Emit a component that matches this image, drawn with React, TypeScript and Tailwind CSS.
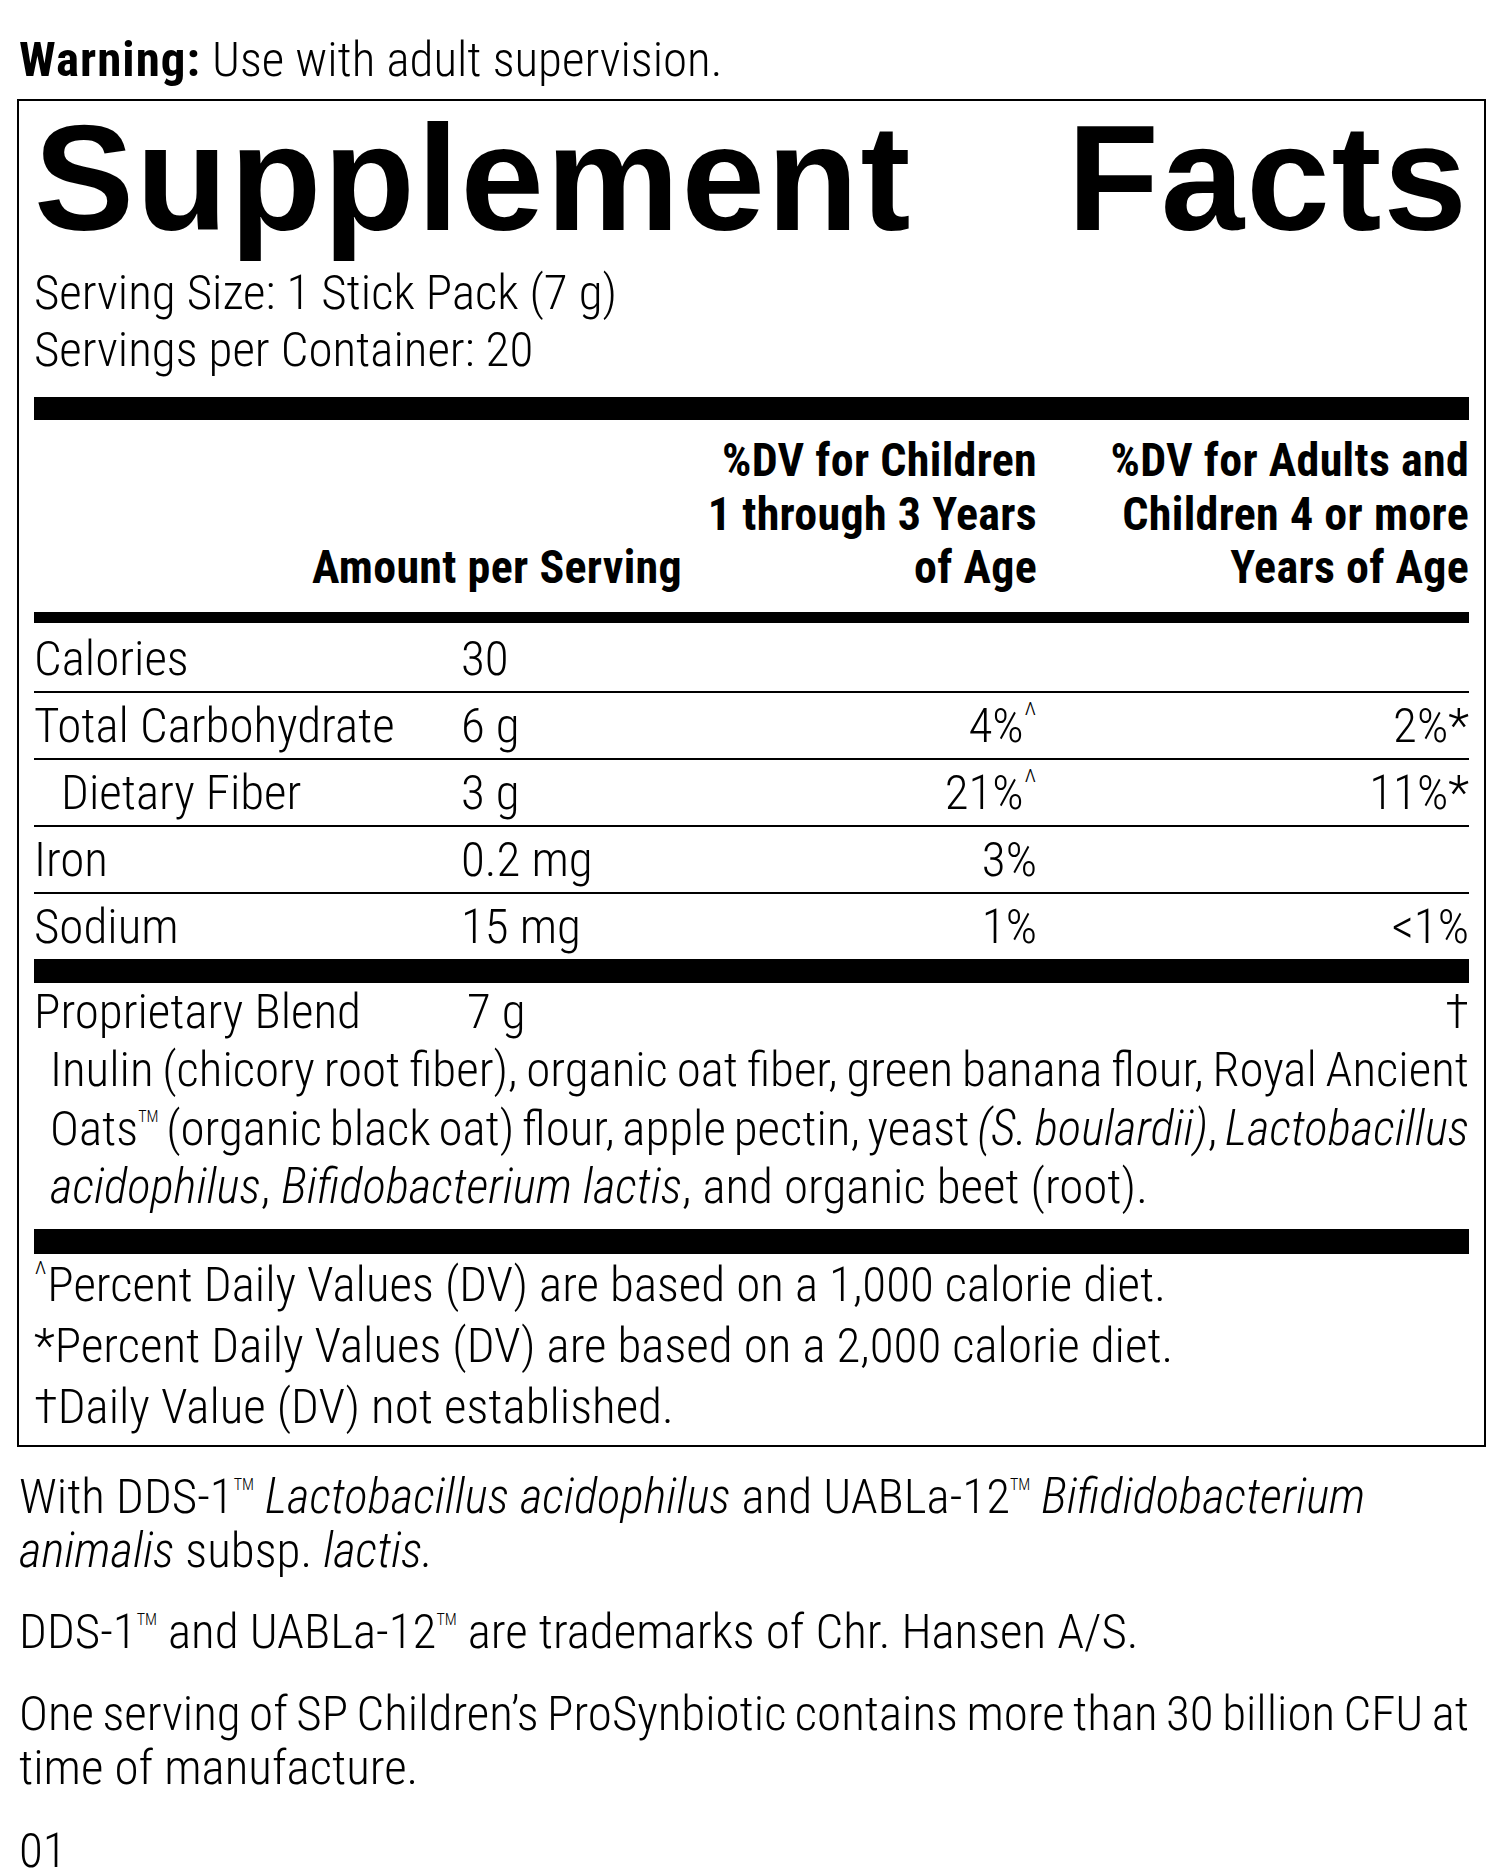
import type { ReactNode } from 'react';

const cond = "font-['Roboto_Condensed','Liberation_Sans',sans-serif]";

function Tm() {
  return <span className="relative -top-[23px] text-[16px] leading-none">TM</span>;
}

function Caret() {
  return <span className="relative -top-[14px] text-[36px] font-extralight leading-none">^</span>;
}

type Row = {
  label: string;
  amount: string;
  child?: ReactNode;
  adult?: ReactNode;
  indent?: boolean;
};

const rows: Row[] = [
  { label: 'Calories', amount: '30' },
  { label: 'Total Carbohydrate', amount: '6 g', child: <>4%<Caret /></>, adult: '2%*' },
  { label: 'Dietary Fiber', amount: '3 g', child: <>21%<Caret /></>, adult: '11%*', indent: true },
  { label: 'Iron', amount: '0.2 mg', child: '3%' },
  { label: 'Sodium', amount: '15 mg', child: '1%', adult: '<1%' },
];

export default function App() {
  return (
    <div className={`h-[1875px] w-[1500px] overflow-hidden bg-white text-black ${cond} text-[49px] font-light`}>
      <p className="ml-[19px] pt-[32px] leading-[56px]">
        <span className="font-bold tracking-[1px]">Warning:</span> Use with adult supervision.
      </p>

      <section className="ml-[17px] mt-[11px] w-[1469px] border-2 border-black px-[15px] pb-[8px]">
        <h1 className="mt-[2px] flex justify-between font-['Liberation_Sans',Arial,sans-serif] text-[150px] font-bold leading-[150px] tracking-[2px]">
          <span>Supplement</span>
          <span>Facts</span>
        </h1>

        <div className="mt-[11px] leading-[57px]">
          <p>Serving Size: 1 Stick Pack (7 g)</p>
          <p>Servings per Container: 20</p>
        </div>

        <div className="mt-[19px] h-[23px] bg-black" />

        {/* column heads */}
        <div className="mt-[14px] flex items-end text-[46px] font-bold leading-[53.5px] tracking-[0.3px]">
          <div className="w-[666px] pr-[18px] text-right">Amount per Serving</div>
          <div className="w-[337px] text-right">
            %DV for Children
            <br />1 through 3 Years
            <br />of Age
          </div>
          <div className="w-[432px] text-right">
            %DV for Adults and
            <br />Children 4 or more
            <br />Years of Age
          </div>
        </div>

        <div className="mt-[17px] h-[11px] bg-black" />

        <div className="pt-[3px]">
          {rows.map((r, i) => (
            <div
              key={r.label}
              className={
                i < rows.length - 1
                  ? 'flex h-[67px] border-b-2 border-black leading-[65px]'
                  : 'flex h-[65px] leading-[65px]'
              }
            >
              <div className={r.indent ? 'w-[427px] pl-[27px]' : 'w-[427px]'}>{r.label}</div>
              <div className="w-[239px]">{r.amount}</div>
              <div className="w-[337px] text-right">{r.child}</div>
              <div className="w-[432px] text-right">{r.adult}</div>
            </div>
          ))}
        </div>

        <div className="h-[24px] bg-black" />

        <div className="flex leading-[58.5px]">
          <div className="w-[427px]">Proprietary Blend</div>
          <div className="w-[239px] pl-[6px]">7 g</div>
          <div className="flex-1 text-right">†</div>
        </div>
        <div className="pl-[16px] leading-[58.5px]">
          <p className="whitespace-nowrap text-justify [text-align-last:justify] [word-spacing:-4px]">
            Inulin (chicory root fiber), organic oat fiber, green banana flour, Royal Ancient
          </p>
          <p className="whitespace-nowrap text-justify [text-align-last:justify] [word-spacing:-4px]">
            Oats<Tm /> (organic black oat) flour, apple pectin, yeast <i>(S. boulardii)</i>, <i>Lactobacillus</i>
          </p>
          <p className="whitespace-nowrap">
            <i>acidophilus</i>, <i>Bifidobacterium lactis</i>, and organic beet (root).
          </p>
        </div>

        <div className="mt-[12px] h-[25px] bg-black" />

        <div className="leading-[61px]">
          <p>
            <Caret />Percent Daily Values (DV) are based on a 1,000 calorie diet.
          </p>
          <p>*Percent Daily Values (DV) are based on a 2,000 calorie diet.</p>
          <p>†Daily Value (DV) not established.</p>
        </div>
      </section>

      <div className="ml-[19px] mr-[31px] leading-[54px]">
        <div className="mt-[23px]">
          <p className="whitespace-nowrap">
            With DDS-1<Tm /> <i>Lactobacillus acidophilus</i> and UABLa-12<Tm /> <i>Bifididobacterium</i>
          </p>
          <p className="whitespace-nowrap">
            <i>animalis</i> subsp. <i>lactis.</i>
          </p>
        </div>
        <p className="mt-[27px] whitespace-nowrap">
          DDS-1<Tm /> and UABLa-12<Tm /> are trademarks of Chr. Hansen A/S.
        </p>
        <div className="mt-[28px]">
          <p className="whitespace-nowrap text-justify [text-align-last:justify] [word-spacing:-4px]">
            One serving of SP Children’s ProSynbiotic contains more than 30 billion CFU at
          </p>
          <p>time of manufacture.</p>
        </div>
        <p className="mt-[36px] leading-[40px]">01</p>
      </div>
    </div>
  );
}
